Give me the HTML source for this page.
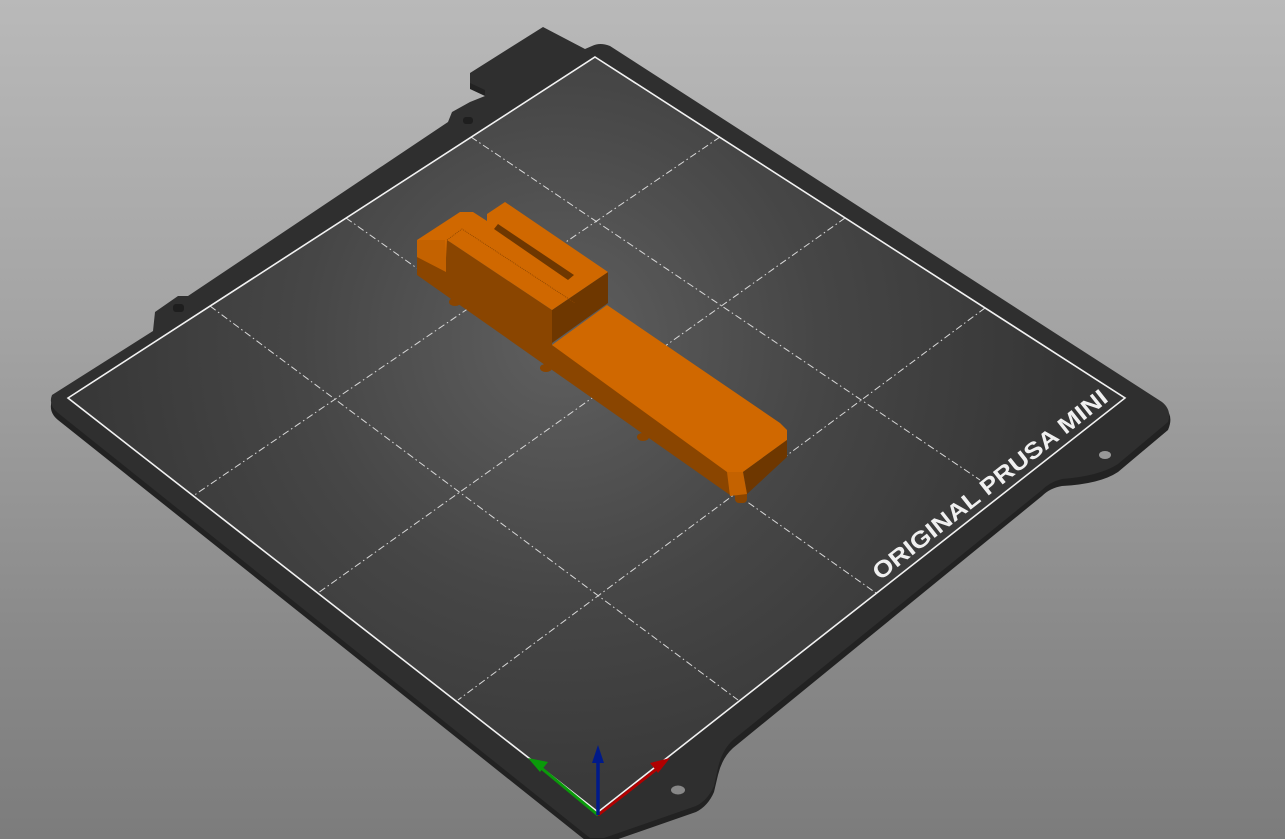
<!DOCTYPE html>
<html><head><style>
html,body{margin:0;padding:0;width:1285px;height:839px;overflow:hidden;}
body{background:linear-gradient(180deg,#b9b9b9 0%,#a3a3a3 40%,#8a8a8a 75%,#7c7c7c 100%);}
svg{position:absolute;left:0;top:0;}
</style></head><body>
<svg width="1285" height="839" viewBox="0 0 1285 839" xmlns="http://www.w3.org/2000/svg">
<defs>
<radialGradient id="bed" cx="560" cy="340" r="520" gradientUnits="userSpaceOnUse">
<stop offset="0" stop-color="#5f5f5f"/>
<stop offset="0.5" stop-color="#464646"/>
<stop offset="1" stop-color="#353535"/>
</radialGradient>
</defs>
<path d="M470,79 L543,32 L585,54 L600,50 Q607,48 615,52 L1165,408 Q1174,416 1168,430 L1118,472 Q1100,484 1062,486 Q1050,488 1042,496 L733,748 Q722,758 718,775 L714,792 Q708,806 696,812 L604,844 L590,844 L58,420 Q48,412 52,400 L153,337 L155,318 L178,302 L188,302 L448,128 L452,118 L470,108 L485,102 L485,96 L470,89 Z" fill="#222"/>
<path d="M470,73 L543,27 L585,49 L592,46 Q600,42 610,46 L1162,402 Q1172,410 1168,422 L1118,464 Q1100,476 1062,479 Q1050,482 1042,490 L733,740 Q722,750 718,768 L714,786 Q708,800 696,806 L604,838 L590,838 L58,413 Q48,405 52,395 L153,331 L155,312 L178,296 L188,296 L448,122 L452,112 L470,102 L485,96 L485,90 L470,83 Z" fill="#2f2f2f"/>
<ellipse cx="678" cy="790" rx="7" ry="4.5" fill="#888"/>
<ellipse cx="1105" cy="455" rx="6" ry="4" fill="#999"/>
<rect x="173" y="304" width="11" height="8" fill="#1e1e1e" rx="3"/>
<rect x="463" y="117" width="10" height="7" fill="#1e1e1e" rx="3"/>
<polygon points="595,57 1125,398 598,812 68,398" fill="url(#bed)"/>
<g stroke="#d8d8d8" stroke-width="1" stroke-dasharray="7 3 1.5 3" fill="none">
<line x1="720" y1="137" x2="193" y2="496"/>
<line x1="845" y1="218" x2="318" y2="593"/>
<line x1="985" y1="308" x2="458" y2="700"/>
<line x1="471" y1="137" x2="980" y2="480"/>
<line x1="346" y1="218" x2="876" y2="593"/>
<line x1="210" y1="306" x2="738" y2="700"/>
</g>
<polygon points="595,57 1125,398 598,812 68,398" fill="none" stroke="#f2f2f2" stroke-width="1.6"/>
<text transform="translate(880,581) rotate(-38.2)" font-family="Liberation Sans, sans-serif" font-weight="bold" font-size="23" fill="#f0f0f0" textLength="292" lengthAdjust="spacingAndGlyphs">ORIGINAL PRUSA MINI</text>
<g fill="#8a4500">
<ellipse cx="455" cy="302" rx="6" ry="4"/>
<ellipse cx="546" cy="368" rx="6" ry="4"/>
<ellipse cx="643" cy="437" rx="6" ry="4"/>
<rect x="735" y="488" width="12" height="15" rx="4"/>
</g>
<polygon points="417,240 447,240 552,310 552,345 727,465 730,495 417,275" fill="#8a4500"/>
<polygon points="417,240 446,240 446,272 417,257" fill="#c46200"/>
<polygon points="552,310 608,272 608,303 552,343" fill="#6e3700"/>
<polygon points="417,240 460,212 473,212 487,221 487,214 505,202 608,272 552,310 447,240 446,258 445,240" fill="#d06800"/>
<polygon points="447,240 462,229 560,294 552,300" fill="#d06800"/>
<polygon points="498,224 574,275 568,280 494,229" fill="#6e3700"/>
<polyline points="447,240 462,229 575,303" fill="none" stroke="#8a4500" stroke-width="0.8" stroke-dasharray="1 1"/>
<polygon points="552,345 607,305 780,423 787,430 787,440 743,472 727,472" fill="#d06800"/>
<polygon points="743,472 787,440 787,457 747,494" fill="#6e3700"/>
<polygon points="727,472 743,472 747,494 730,496" fill="#c46200"/>
<line x1="598" y1="815" x2="540" y2="767" stroke="#0a9a0a" stroke-width="3"/>
<polygon points="528,758 548,762 540,772" fill="#0a9a0a"/>
<line x1="598" y1="815" x2="658" y2="768" stroke="#b00000" stroke-width="3"/>
<polygon points="670,758 650,763 658,773" fill="#b00000"/>
<line x1="598" y1="815" x2="598" y2="760" stroke="#001a8a" stroke-width="3.5"/>
<polygon points="598,745 592,763 604,763" fill="#001a8a"/>
</svg>
</body></html>
